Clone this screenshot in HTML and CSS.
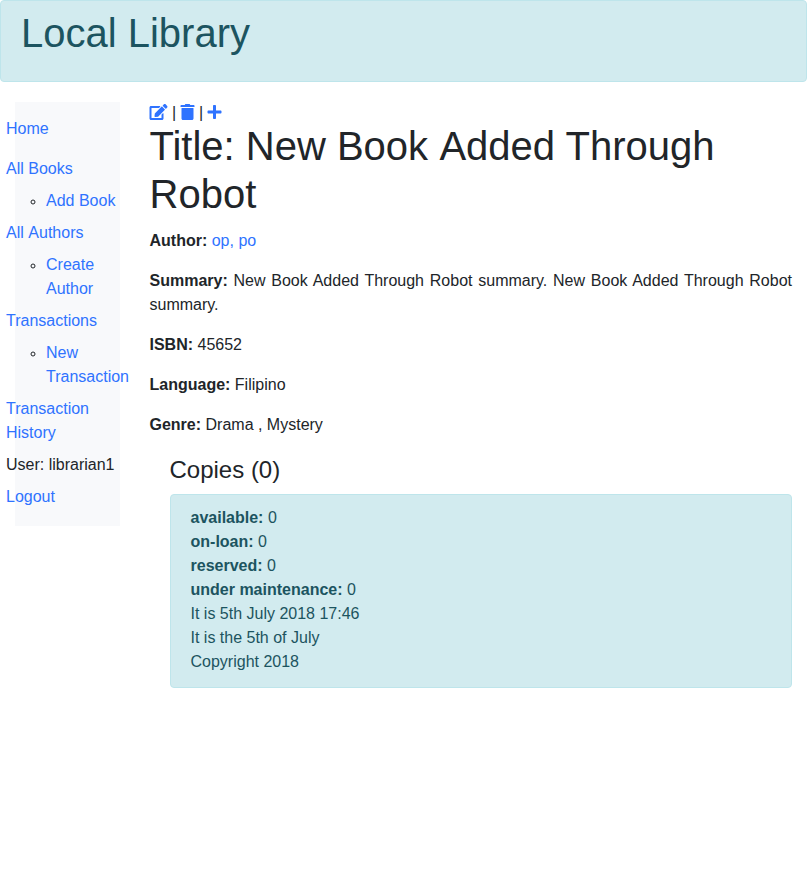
FILE: index.html
```html
<!DOCTYPE html>
<html lang="en">
<head>
<meta charset="utf-8">
<title>Local Library</title>
<link rel="stylesheet" href="styles.css">
</head>
<body>
<header class="alert banner"><h1>Local Library</h1></header>
<div class="row">
<nav class="sidebar">
<ul class="nav">
<li class="home"><a href="#">Home</a></li>
<li><a href="#">All Books</a><ul><li><a href="#">Add Book</a></li></ul></li>
<li><a href="#">All <span class="nudge">Authors</span></a><ul><li><a href="#">Create Author</a></li></ul></li>
<li><a href="#">Transactions</a><ul><li><a href="#">New Transaction</a></li></ul></li>
<li><a href="#">Transaction History</a></li>
<li>User: librarian1</li>
<li><a href="#">Logout</a></li>
</ul>
</nav>
<main class="content">
<div class="actions">
<a href="#" aria-label="Edit"><svg class="i-edit" viewBox="16 0 576 512"><path d="M402.600 83.200l90.200 90.200c3.800 3.800 3.800 10 0 13.800L274.400 405.600l-92.800 10.300c-12.400 1.400-22.900-9.100-21.500-21.500l10.300-92.800L388.800 83.200c3.800-3.800 10-3.800 13.800 0zm162-22.900l-48.800-48.800c-15.200-15.200-39.900-15.200-55.200 0l-35.400 35.400c-3.800 3.800-3.800 10 0 13.800l90.200 90.200c3.800 3.800 10 3.800 13.800 0l35.400-35.400c15.200-15.300 15.200-40 0-55.200zM384 346.200V448H64V128h229.800c3.200 0 6.200-1.300 8.500-3.500l40-40c7.600-7.600 2.200-20.500-8.500-20.500H48C21.500 64 0 85.500 0 112v352c0 26.500 21.500 48 48 48h352c26.500 0 48-21.500 48-48V306.200c0-10.700-12.900-16-20.500-8.500l-40 40c-2.200 2.300-3.500 5.300-3.500 8.500z"/></svg></a>
<span class="sep">|</span>
<a href="#" aria-label="Delete"><svg class="i-trash" viewBox="16 0 448 512"><path d="M0 84V56c0-13.300 10.700-24 24-24h112l9.400-18.700c4-8.200 12.300-13.300 21.400-13.300h114.300c9.100 0 17.400 5.100 21.500 13.300L312 32h112c13.300 0 24 10.700 24 24v28c0 6.600-5.400 12-12 12H12C5.400 96 0 90.600 0 84zm416 56v324c0 26.500-21.500 48-48 48H80c-26.500 0-48-21.500-48-48V140c0-6.600 5.400-12 12-12h360c6.600 0 12 5.400 12 12z"/></svg></a>
<span class="sep">|</span>
<a href="#" aria-label="Add"><svg class="i-plus" viewBox="16 0 448 512"><path d="M416 208H272V64c0-17.700-14.300-32-32-32h-32c-17.700 0-32 14.300-32 32v144H32c-17.700 0-32 14.300-32 32v32c0 17.700 14.300 32 32 32h144v144c0 17.700 14.300 32 32 32h32c17.700 0 32-14.300 32-32V304h144c17.700 0 32-14.300 32-32v-32c0-17.700-14.300-32-32-32z"/></svg></a>
</div>
<h1>Title: New Book <span class="nudge">Added</span> Through Robot</h1>
<p><strong>Author:</strong> <a href="#">op, po</a></p>
<p><strong>Summary:</strong> New Book Added Through Robot summary. New Book Added Through Robot summary.</p>
<p><strong>ISBN:</strong> 45652</p>
<p><strong>Language:</strong> Filipino</p>
<p><strong>Genre:</strong> Drama , Mystery</p>
<section class="copies">
<h4>Copies (0)</h4>
<div class="alert">
<div><strong>available:</strong> 0</div>
<div><strong>on-loan:</strong> 0</div>
<div><strong>reserved:</strong> 0</div>
<div><strong>under maintenance:</strong> 0</div>
<div>It is 5th July 2018 17:46</div>
<div>It is the 5th of July</div>
<div>Copyright 2018</div>
</div>
</section>
</main>
</div>
</body>
</html>
```
FILE: styles.css
```css
*{box-sizing:border-box}
body{margin:0;font:16px/24px "Liberation Sans",Arial,sans-serif;color:#212529;background:#fff}
a{color:#2f73ff;text-decoration:none}
h1{margin:0 0 8px;font-size:40px;line-height:48px;font-weight:500}
h4{margin:0 0 8px;font-size:24px;line-height:28.8px;font-weight:500}
p{margin:0 0 16px;text-align:justify}
.nudge{margin-left:.005em}
.alert{padding:12px 20px;border:1px solid #bee5eb;border-radius:4px;background:#d2ebef;color:#1c5460}
.banner{height:82px;padding-top:8px;margin-bottom:20px}
.row{display:flex;align-items:flex-start}
.sidebar{width:104.5px;height:424px;margin-left:15px;padding-top:15px;background:#f8f9fb}
.nav{list-style:none;margin:0 -9.500px 0 -9px;padding:0}
.nav>li{margin-bottom:8px}
.nav>.home{margin-bottom:16px}
.nav ul{margin:8px 0 0;padding-left:40px;list-style:circle}
.nav ul li::marker{font-size:14px}
.content{width:642.5px;margin-left:30px}
.content h1{margin-bottom:11px}
.actions{height:20px;display:flex;align-items:center}
.actions a{display:flex}
svg{fill:currentColor;height:16px;overflow:visible}
.i-edit{width:18px}
.i-trash,.i-plus{width:14px}
.sep{width:4px;margin:2px 4.500px 0 4.500px}
.copies{margin-left:20px;padding-top:3px}
.copies h4{margin-bottom:9px}
.copies .alert{padding:11px 20px 13px}
```
